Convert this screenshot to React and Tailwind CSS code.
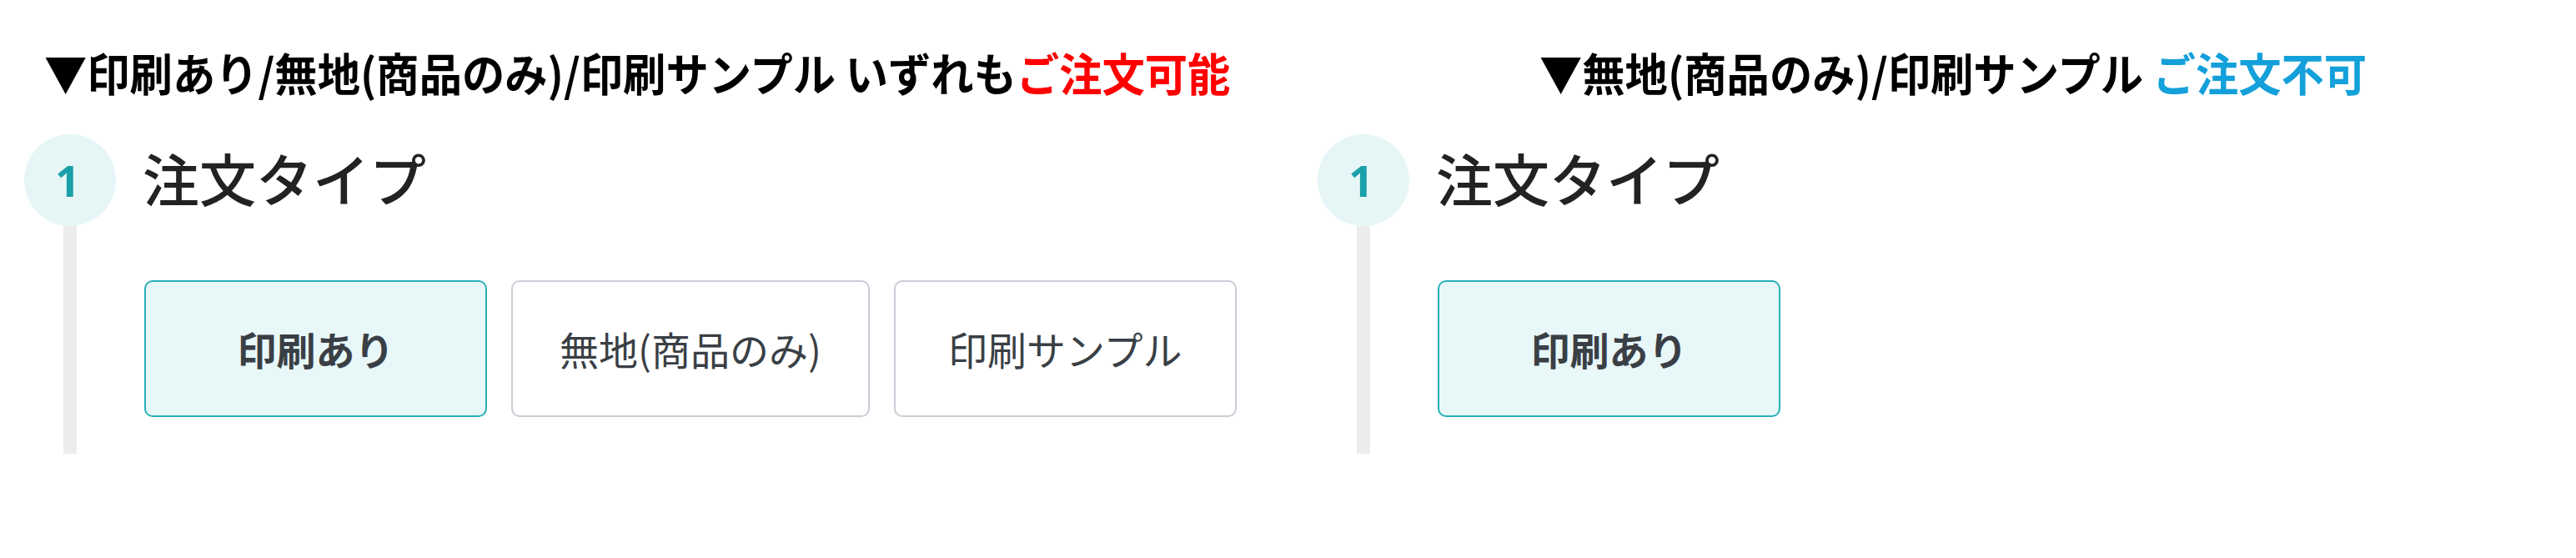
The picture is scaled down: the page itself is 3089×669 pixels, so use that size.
import React from "react";

const JP = { fontFamily: '"Noto Sans CJK JP", "Noto Sans", sans-serif' };

function Step({ options }) {
  return (
    <div className="flex pl-[29px]">
      <div className="w-[110px] flex flex-col items-center shrink-0">
        <div className="w-[110px] h-[110px] rounded-full bg-[#e6f6f7] flex items-center justify-center">
          <span className="text-[52px] leading-none font-bold text-[#1aa0a8] -ml-[6px]" style={{ fontFamily: '"Noto Sans", sans-serif' }}>1</span>
        </div>
        <div className="w-[16px] h-[273px] bg-[#ebecec]" />
      </div>
      <div className="ml-[34px] flex flex-col">
        <div className="h-[110px] flex items-center pb-[6px]">
          <span className="text-[68px] leading-none font-medium text-[#222] -ml-[2px]">注文タイプ</span>
        </div>
        <div className="mt-[65px] flex gap-[29px]">
          {options.map((o, i) => (
            <div
              key={i}
              className={
                i === 0
                  ? "h-[164px] min-w-[411px] px-[56px] rounded-[10px] border-2 border-[#26b0b8] bg-[#e8f7f8] flex items-center justify-center text-[47px] font-semibold text-[#3a3f45]"
                  : "h-[164px] min-w-[411px] px-[56px] rounded-[10px] border-2 border-[#c9cdd6] bg-white flex items-center justify-center text-[47px] font-normal text-[#3a3f45]"
              }
            >
              {o}
            </div>
          ))}
        </div>
      </div>
    </div>
  );
}

export default function App() {
  return (
    <div className="w-[3089px] h-[669px] bg-white flex" style={JP}>
      <div className="w-[1551px] shrink-0 flex flex-col">
        <div className="h-[161px] pt-[60px] pl-[53px]">
          <div className="text-[54px] leading-none font-bold text-black whitespace-nowrap origin-left scale-x-[0.95]">
            ▼印刷あり/無地(商品のみ)/印刷サンプル いずれも<span className="text-[#ff0000]">ご注文可能</span>
          </div>
        </div>
        <Step options={["印刷あり", "無地(商品のみ)", "印刷サンプル"]} />
      </div>
      <div className="flex-1 flex flex-col">
        <div className="h-[161px] pt-[60px] pl-[295px]">
          <div className="text-[54px] leading-none font-bold text-black whitespace-nowrap origin-left scale-x-[0.95]">
            ▼無地(商品のみ)/印刷サンプル <span className="text-[#14a0da]">ご注文不可</span>
          </div>
        </div>
        <Step options={["印刷あり"]} />
      </div>
    </div>
  );
}
